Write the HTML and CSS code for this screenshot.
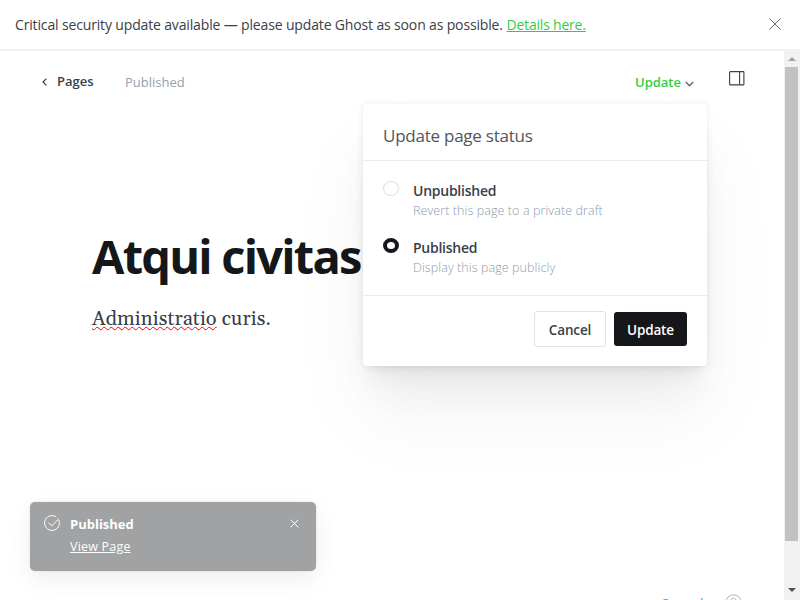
FILE: index.html
```html
<!DOCTYPE html>
<html lang="en">
<head>
<meta charset="utf-8">
<title>Edit page</title>
<link rel="stylesheet" href="styles.css">
</head>
<body>
<div class="alert">
  <p class="alert-text"><span class="alert-copy">Critical security update available — please update Ghost as soon as possible.</span> <a class="alert-link" href="#">Details here.</a></p>
  <svg class="alert-close" width="12" height="12" viewBox="0 0 12 12"><path d="M.4.4l11.2 11.2M11.6.4L.4 11.6"/></svg>
</div>
<div class="workspace">
  <main class="editor">
    <header class="toolbar">
      <svg class="back-icon" width="5" height="8" viewBox="0 0 5 8"><path d="M4.4.6L1 4l3.4 3.4"/></svg>
      <a class="back">Pages</a>
      <span class="status">Published</span>
      <div class="update-trigger"><span class="update-label">Update</span><svg width="9" height="6" viewBox="0 0 9 6"><path d="M.8 1l3.7 3.7L8.2 1"/></svg></div>
      <svg class="sidebar-icon" width="16" height="15" viewBox="0 0 16 15"><rect x=".6" y=".6" width="14.3" height="13.3" rx=".7"/><path d="M10.6.5v13.5"/></svg>
    </header>
    <article class="content">
      <h1 class="title">Atqui civitas.</h1>
      <p class="body"><span class="misspelled">Administratio</span> curis.</p>
    </article>
    <footer class="wordcount"><span>2 words</span><svg width="17" height="17" viewBox="0 0 17 17"><circle cx="8.5" cy="8.5" r="7.7"/><path d="M6 6.8c0-3.6 5-3.6 5-.3 0 2-2.5 2-2.5 4"/></svg></footer>
    <section class="dropdown">
      <h2 class="dropdown-title">Update page status</h2>
      <div class="options">
        <div class="option"><i class="radio"></i><div><div class="option-name unpublished">Unpublished</div><div class="option-desc revert">Revert this page to a private draft</div></div></div>
        <div class="option"><i class="radio checked"></i><div><div class="option-name">Published</div><div class="option-desc">Display this page publicly</div></div></div>
      </div>
      <div class="actions"><button class="btn cancel"><span>Cancel</span></button><button class="btn confirm"><span>Update</span></button></div>
    </section>
    <aside class="toast">
      <svg class="toast-check" width="16" height="16" viewBox="0 0 16 16"><path d="M14.7 4.9A7.4 7.4 0 1 1 12.3 2M4.5 7.7l3.2 3.2L15 3.6"/></svg>
      <div class="toast-copy"><div class="toast-title">Published</div><a class="toast-link">View Page</a></div>
      <svg class="toast-close" width="9" height="9" viewBox="0 0 9 9"><path d="M.7.7l7.6 7.6M8.3.7L.7 8.3"/></svg>
    </aside>
  </main>
  <div class="scrollbar"><i class="arrow up"></i><i class="thumb"></i><i class="arrow down"></i></div>
</div>
</body>
</html>
```

FILE: styles.css
```css
* { box-sizing: border-box; }
body { margin: 0; width: 800px; height: 600px; overflow: hidden; background: #fff; color: #394047; font: 13px/20px "Open Sans", sans-serif; }
p, h1, h2 { margin: 0; }
svg { fill: none; flex: none; display: block; }
.alert { height: 51px; padding: 0 19px 1px 15px; display: flex; align-items: center; justify-content: space-between; border-bottom: 2px solid #f1f1f1; }
.alert-text { font-size: 14px; white-space: nowrap; padding-top: 2px; }
.alert-copy { letter-spacing: -.15px; }
.alert-link { color: #30cf43; letter-spacing: -.2px; }
.alert-close { stroke: #626971; }
.workspace { display: flex; height: 549px; }
.editor { position: relative; flex: 1; overflow: hidden; }
.toolbar { height: 62px; padding: 0 39px 0 42px; display: flex; align-items: center; }
.back-icon { stroke: #394047; stroke-width: 1.2; }
.back { margin: -2px 0 0 10px; width: 68px; font-weight: 600; }
.status { color: #95a1ad; }
.update-trigger { margin-left: auto; display: flex; align-items: center; gap: 4px; color: #30cf43; font-weight: 600; }
.update-trigger svg { stroke: #626971; stroke-width: 1.5; margin-top: 3px; }
.sidebar-icon { stroke: #394047; stroke-width: 1.1; margin: -7px 0 0 35px; }
.content { padding: 114px 0 0 92px; }
.title { font-size: 47px; line-height: 58px; font-weight: 700; color: #15171a; letter-spacing: -1.78px; white-space: nowrap; }
.body { margin-top: 19px; font: 20px/30px Gelasio, "Noto Serif", "Liberation Serif", serif; letter-spacing: .1px; }
.misspelled { text-decoration: underline wavy #f00 1px; text-underline-offset: 1px; text-decoration-skip-ink: none; }
.wordcount { position: absolute; left: 662px; top: 543px; display: flex; gap: 16px; color: #7c8b9a; white-space: nowrap; }
.wordcount span { margin-top: -1px; letter-spacing: -.1px; }
.wordcount svg { stroke: #a5b0bd; }
.dropdown { position: absolute; left: 363px; top: 53px; width: 344px; height: 262px; border-radius: 4px; background: #fff; box-shadow: 0 0 7px rgba(0,0,0,.08), 0 5.1px 5.3px -5px rgba(0,0,0,.03), 0 9.5px 10px -5px rgba(0,0,0,.03), 0 17px 17.9px -5px rgba(0,0,0,.03), 0 31.8px 33.4px -5px rgba(0,0,0,.035), 0 50px 80px rgba(0,0,0,.05); }
.dropdown-title { height: 57px; padding: 19px 20px 0; border-bottom: 1px solid #e9ebed; font-size: 17px; line-height: 26px; font-weight: 400; color: #50565e; letter-spacing: -.24px; }
.options { height: 135px; padding-top: 20px; border-bottom: 1px solid #e9ebed; }
.option { display: flex; gap: 14px; height: 57px; padding-left: 20px; }
.radio { width: 16px; height: 15px; border: 1px solid #dae1e8; border-radius: 50%; }
.radio.checked { border: 4px solid #15171a; }
.option-name { font-size: 14px; line-height: 19px; padding-bottom: 1px; font-weight: 600; letter-spacing: -.25px; }
.option-desc { font-size: 12.5px; line-height: 20px; font-weight: 300; color: #8e9cac; letter-spacing: .09px; }
.actions { display: flex; justify-content: flex-end; gap: 8px; padding: 15px 20px; }
.btn { height: 34px; margin-top: 1px; padding: 0; border: 0; border-radius: 3px; font: 600 13.5px/35px "Open Sans", sans-serif; letter-spacing: -.15px; text-align: center; }
.btn span { display: block; padding-top: 1px; }
.cancel { width: 72px; height: 36px; margin-top: 0; border: 1px solid #dfe1e8; background: #fff; color: #394047; }
.confirm { width: 73px; background: #15171a; color: #fff; }
.toast { position: absolute; left: 30px; top: 451px; width: 286px; height: 69px; padding: 14px 17px 0 14px; display: flex; border-radius: 5px; background: #a1a2a3; color: #fff; box-shadow: 0 0 2px rgba(0,0,0,.14), 0 8px 24px rgba(0,0,0,.07); }
.toast svg { stroke: #fff; }
.toast-check { margin-top: -1px; }
.toast-copy { flex: 1; margin: -3px 0 0 10px; }
.toast-title { font-weight: 700; line-height: 22px; }
.toast-link { display: block; line-height: 23px; font-size: 12.5px; letter-spacing: .2px; text-decoration: underline; }
.toast svg.toast-close { margin-top: 3px; }
.scrollbar { width: 16px; background: #f1f1f1; display: flex; flex-direction: column; align-items: center; padding-right: 1px; }
.arrow { border: 4px solid transparent; }
.up { border-bottom-color: #a3a3a3; border-top: 0; margin: 6px 0; }
.thumb { width: 13px; height: 474px; background: #c1c1c1; }
.down { border-top-color: #505050; border-bottom: 0; margin-top: 47px; }
```
